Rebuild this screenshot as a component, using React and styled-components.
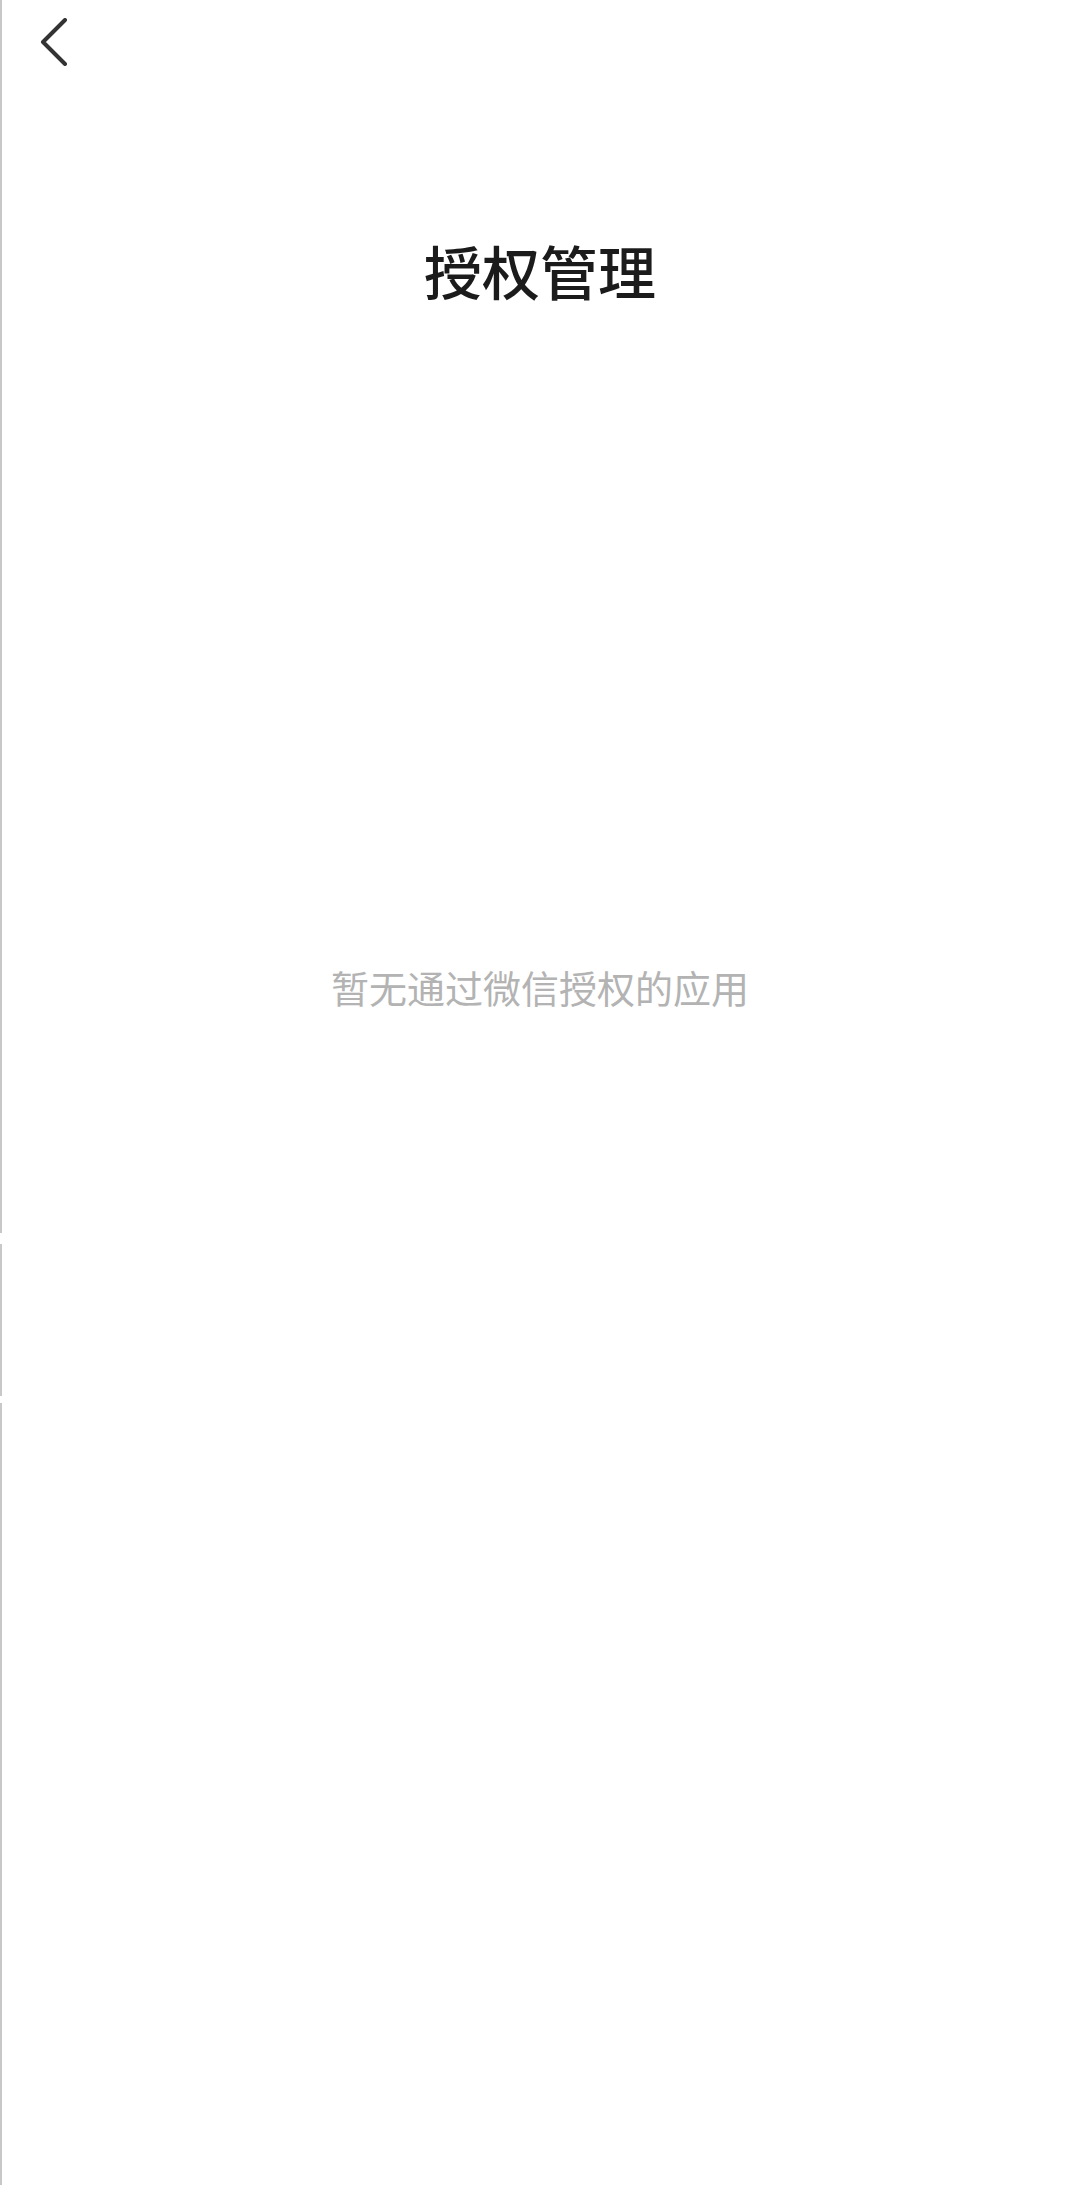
import React from "react";
import styled, { createGlobalStyle } from "styled-components";

const Global = createGlobalStyle`
  html, body { margin: 0; padding: 0; background: #ffffff; }
  body { font-family: "Noto Sans CJK SC", "Noto Sans", sans-serif; }
`;

const Page = styled.div`
  position: relative;
  width: 1080px;
  min-height: 2185px;
  box-sizing: border-box;
  background: #ffffff;
  display: flex;
  flex-direction: column;
  align-items: stretch;
  background-image: linear-gradient(
    to bottom,
    #c8c8c8 0px,
    #c8c8c8 1233px,
    #ffffff 1233px,
    #ffffff 1244px,
    #c8c8c8 1244px,
    #c8c8c8 1396px,
    #ffffff 1396px,
    #ffffff 1403px,
    #c8c8c8 1403px
  );
  background-size: 2px 100%;
  background-repeat: no-repeat;
`;

const Header = styled.div`
  height: 84px;
  display: flex;
  align-items: center;
  padding-left: 30px;
`;

const BackButton = styled.button`
  width: 50px;
  height: 60px;
  padding: 0;
  border: none;
  background: transparent;
  display: flex;
  align-items: center;
  justify-content: center;
  cursor: pointer;
`;

const Title = styled.h1`
  margin: 0;
  margin-top: 150px;
  text-align: center;
  font-size: 58px;
  line-height: 72px;
  font-weight: 500;
  color: #1b1b1b;
`;

const Empty = styled.p`
  margin: 0;
  margin-top: 653px;
  text-align: center;
  font-size: 38px;
  line-height: 56px;
  font-weight: 400;
  color: #b3b3b3;
`;

export default function App() {
  return (
    <>
      <Global />
      <Page>
        <Header>
          <BackButton aria-label="返回">
            <svg width="30" height="48" viewBox="0 0 30 48" fill="none">
              <path
                d="M25 2 L3 24 L25 46"
                stroke="#333333"
                strokeWidth="4"
                strokeLinecap="round"
                strokeLinejoin="round"
              />
            </svg>
          </BackButton>
        </Header>
        <Title>授权管理</Title>
        <Empty>暂无通过微信授权的应用</Empty>
      </Page>
    </>
  );
}
